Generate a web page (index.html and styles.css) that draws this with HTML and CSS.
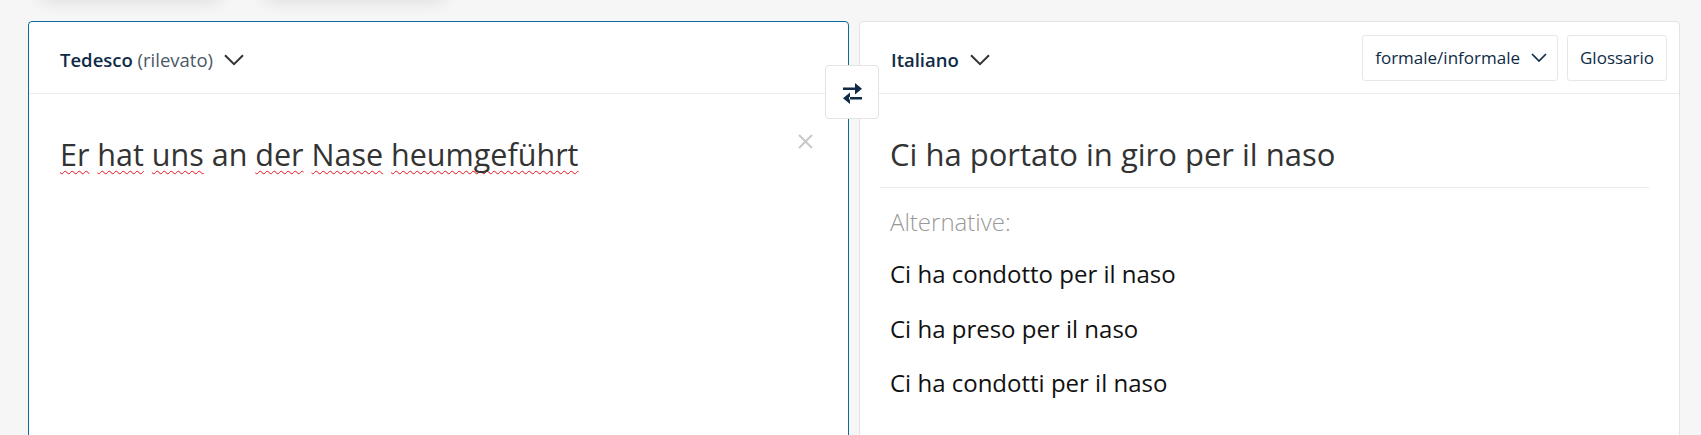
FILE: index.html
```html
<!DOCTYPE html>
<html lang="it">
<head>
<meta charset="utf-8">
<title>Traduttore</title>
<link rel="stylesheet" href="styles.css">
</head>
<body>
<div class="tabs"><div class="tab"></div><div class="tab"></div></div>
<main class="translator">
  <section class="panel panel-source">
    <header class="panel-head">
      <button class="lang"><span class="lang-label"><span class="lang-name">Tedesco</span> <span class="lang-note">(rilevato)</span></span>
        <svg class="chev" width="20" height="12" viewBox="0 0 20 12"><path d="M1 1.2l9 9 9-9" fill="none" stroke="#333" stroke-width="2"/></svg>
      </button>
    </header>
    <div class="source-body">
      <p class="source-text"><span class="miss">Er</span> <span class="miss">hat</span> <span class="miss">uns</span> an <span class="miss">der</span> <span class="miss">Nase</span> <span class="miss">heumgeführt</span></p>
      <button class="clear" aria-label="Cancella"><svg width="15" height="15" viewBox="0 0 15 15"><path d="M1 1l13 13M14 1L1 14" stroke="#c9c9c9" stroke-width="2"/></svg></button>
    </div>
  </section>
  <button class="swap" aria-label="Inverti lingue">
    <svg width="19" height="21" viewBox="0 0 19 21"><path d="M0 4.5h13v2.5H0z M12 0l7 5.75-7 5.75z" fill="#0f2b46"/><path d="M6 14h13v2.5H6z M7 9.5L0 15.25 7 21z" fill="#0f2b46"/></svg>
  </button>
  <section class="panel panel-target">
    <header class="panel-head">
      <button class="lang"><span class="lang-label"><span class="lang-name">Italiano</span></span>
        <svg class="chev" width="20" height="12" viewBox="0 0 20 12"><path d="M1 1.2l9 9 9-9" fill="none" stroke="#333" stroke-width="2"/></svg>
      </button>
      <div class="tools">
        <button class="tool tool-menu">formale/informale
          <svg width="16" height="9" viewBox="0 0 16 9"><path d="M1 1l7 7 7-7" fill="none" stroke="#0f2b46" stroke-width="1.7"/></svg>
        </button>
        <button class="tool">Glossario</button>
      </div>
    </header>
    <div class="target-main">Ci ha portato in giro per il naso</div>
    <div class="alts">
      <p class="alts-label">Alternative:</p>
      <ul class="alts-list">
        <li>Ci ha condotto per il naso</li>
        <li>Ci ha preso per il naso</li>
        <li>Ci ha condotti per il naso</li>
      </ul>
    </div>
  </section>
</main>
</body>
</html>
```
FILE: styles.css
```css
html, body {
  margin: 0;
  height: 435px;
  overflow: hidden;
}
body {
  background: #f6f6f6;
  font-family: "Open Sans", "Noto Sans", sans-serif;
}
button {
  font-family: inherit;
  cursor: pointer;
}
.tabs {
  display: flex;
  gap: 40px;
  height: 40px;
  margin-top: -40px;
  padding-left: 38px;
}
.tab {
  width: 184px;
  height: 40px;
  background: #f6f6f6;
  border-radius: 0 0 10px 10px;
  box-shadow: 0 3px 16px rgba(0, 0, 0, 0.09);
}
.translator {
  position: relative;
  display: flex;
  gap: 10px;
  margin: 21px 21px 0 28px;
}
.panel {
  flex: 1;
  min-width: 0;
  height: 470px;
  background: #fff;
  border: 1px solid #e3e3e3;
  border-radius: 4px 4px 0 0;
}
.panel-source {
  border-color: #0b6a9b;
}
.panel-head {
  display: flex;
  align-items: center;
  height: 71px;
  padding: 0 12px 0 31px;
  border-bottom: 1px solid #ececec;
}
.lang {
  display: flex;
  align-items: center;
  gap: 11px;
  padding: 4px 0 0;
  border: 0;
  background: none;
  font-size: 18.5px;
  line-height: normal;
  color: #0f2b46;
}
.lang-name {
  font-weight: 600;
}
.lang-note {
  font-weight: 400;
  color: #4b5866;
}
.chev {
  display: block;
}
.tools {
  margin-left: auto;
  display: flex;
  gap: 9px;
}
.tool {
  display: flex;
  align-items: center;
  gap: 11px;
  height: 46px;
  padding: 0 12px;
  border: 1px solid #e7e7e7;
  border-radius: 3px;
  background: #fff;
  font-size: 17px;
  font-weight: 500;
  color: #0f2b46;
}
.tool-menu {
  padding-right: 10px;
}
.source-body {
  display: flex;
  align-items: flex-start;
  padding: 37px 35px 0 31px;
}
.source-text {
  flex: 1;
  margin: 0;
  font-size: 30.5px;
  line-height: 46px;
  color: #333;
}
.miss {
  text-decoration: underline wavy #e8101c;
  text-decoration-thickness: 1px;
  text-underline-offset: 4px;
  text-decoration-skip-ink: none;
}
.clear {
  margin-top: 3px;
  padding: 0;
  border: 0;
  background: none;
  width: 15px;
  height: 15px;
}
.clear svg {
  display: block;
}
.swap {
  position: absolute;
  left: calc(50% - 29px);
  top: 44px;
  width: 54px;
  height: 54px;
  display: flex;
  align-items: center;
  justify-content: center;
  padding: 0 0 0 1px;
  background: #fff;
  border: 1px solid #e3e3e3;
  border-radius: 4px;
}
.swap svg {
  display: block;
  margin-top: 2px;
}
.target-main {
  margin: 0 30px 0 20px;
  padding: 37px 10px 10px;
  font-size: 31px;
  line-height: 46px;
  color: #333;
  border-bottom: 1px solid #e9e9e9;
}
.alts {
  margin: 0 30px 0 20px;
  padding: 0 10px;
}
.alts-label {
  margin: 19px 0 0;
  font-size: 24px;
  font-weight: 300;
  line-height: 30px;
  color: #999;
}
.alts-list {
  list-style: none;
  margin: 10px 0 0;
  padding: 0;
}
.alts-list li {
  padding: 12px 0;
  font-size: 24px;
  line-height: 30.5px;
  color: #111;
}
```
